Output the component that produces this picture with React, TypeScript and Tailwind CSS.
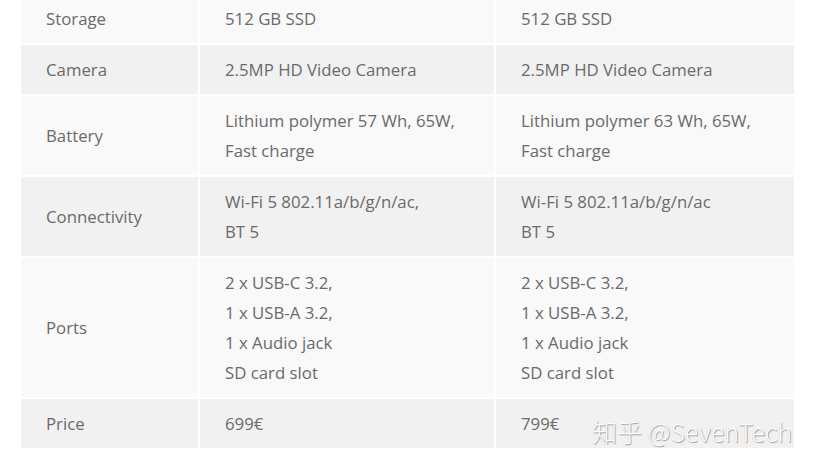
import React from "react";

const rows: { label: string; a: string[]; b: string[] }[] = [
  { label: "Storage", a: ["512 GB SSD"], b: ["512 GB SSD"] },
  { label: "Camera", a: ["2.5MP HD Video Camera"], b: ["2.5MP HD Video Camera"] },
  { label: "Battery", a: ["Lithium polymer 57 Wh, 65W,", "Fast charge"], b: ["Lithium polymer 63 Wh, 65W,", "Fast charge"] },
  { label: "Connectivity", a: ["Wi-Fi 5 802.11a/b/g/n/ac,", "BT 5"], b: ["Wi-Fi 5 802.11a/b/g/n/ac", "BT 5"] },
  { label: "Ports", a: ["2 x USB-C 3.2,", "1 x USB-A 3.2,", "1 x Audio jack", "SD card slot"], b: ["2 x USB-C 3.2,", "1 x USB-A 3.2,", "1 x Audio jack", "SD card slot"] },
  { label: "Price", a: ["699€"], b: ["799€"] },
];

export default function App() {
  return (
    <div className="relative w-[816px] h-[466px] overflow-hidden bg-white" style={{ fontFamily: "'Open Sans', 'Noto Sans', sans-serif" }}>
      <div className="ml-[21px] -mt-[6px] w-[773px] grid grid-cols-[177px_294px_298px] gap-[2px] text-[16.8px] leading-[30px] text-[#6a6a6a]">
        {rows.map((r, i) => {
          const bg = i % 2 === 0 ? "bg-[#f9f9f9]" : "bg-[#f1f1f1]";
          return (
            <React.Fragment key={r.label}>
              <div className={`${bg} pl-[25px] pt-[10px] pb-[9px] flex items-center`}>{r.label}</div>
              <div className={`${bg} pl-[25px] pt-[10px] pb-[9px]`}>
                {r.a.map((t) => (
                  <div key={t}>{t}</div>
                ))}
              </div>
              <div className={`${bg} pl-[25px] pt-[10px] pb-[9px]`}>
                {r.b.map((t) => (
                  <div key={t}>{t}</div>
                ))}
              </div>
            </React.Fragment>
          );
        })}
      </div>
      <div
        className="absolute left-[592px] top-[415px] text-[25px] leading-[32px] text-white whitespace-nowrap font-light"
        style={{ fontFamily: "'Noto Sans CJK SC', 'Noto Sans', sans-serif", textShadow: "1px 1px 1px rgba(0,0,0,0.35), -0.5px -0.5px 0.5px rgba(0,0,0,0.15)" }}
      >
        知乎 @SevenTech
      </div>
    </div>
  );
}
